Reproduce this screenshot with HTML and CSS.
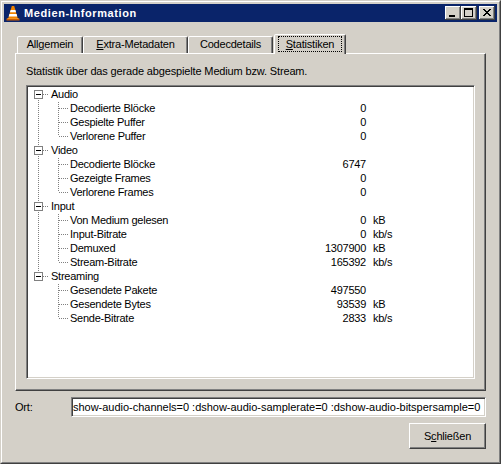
FILE: index.html
```html
<!DOCTYPE html>
<html lang="de">
<head>
<meta charset="utf-8">
<title>Medien-Information</title>
<link rel="stylesheet" href="styles.css">
</head>
<body>
<div class="window">
  <div class="frame">
    <div class="titlebar">
      <svg class="appicon" width="16" height="16" viewBox="0 0 16 16">
        <path d="M1.5 13.5h13v2h-13z" fill="#c85a00"/>
        <path d="M2.5 13h11v1h-11z" fill="#f7a440"/>
        <path d="M6.8 1h2.4l3.6 12.5H3.2z" fill="#f08300"/>
        <path d="M5.6 5h4.8l0.7 2.3H4.9z" fill="#ffffff"/>
        <path d="M4.4 9h7.2l0.7 2.4H3.7z" fill="#ffffff"/>
      </svg>
      <span class="title">Medien-Information</span>
      <div class="tbtns">
        <div class="tbtn"><svg width="16" height="14" viewBox="0 0 16 14"><rect x="4" y="9" width="6" height="2"/></svg></div>
        <div class="tbtn"><svg width="16" height="14" viewBox="0 0 16 14"><path d="M3 2h9v9H3z M4 4h7v6H4z" fill-rule="evenodd"/></svg></div>
        <div class="tbtn close"><svg width="16" height="14" viewBox="0 0 16 14" shape-rendering="crispEdges"><rect x="4" y="3" width="2" height="1"/><rect x="10" y="3" width="2" height="1"/><rect x="5" y="4" width="2" height="1"/><rect x="9" y="4" width="2" height="1"/><rect x="6" y="5" width="4" height="1"/><rect x="7" y="6" width="2" height="1"/><rect x="6" y="7" width="4" height="1"/><rect x="5" y="8" width="2" height="1"/><rect x="9" y="8" width="2" height="1"/><rect x="4" y="9" width="2" height="1"/><rect x="10" y="9" width="2" height="1"/></svg></div>
      </div>
    </div>
    <div class="content">
      <div class="tabs">
        <div class="tab t1">All<u>g</u>emein</div>
        <div class="tab t2"><u>E</u>xtra-Metadaten</div>
        <div class="tab t3">Codecdetails</div>
        <div class="tab t4 sel"><span class="focus"><u>S</u>tatistiken</span></div>
      </div>
      <div class="panel">
        <div class="desc">Statistik über das gerade abgespielte Medium bzw. Stream.</div>
        <div class="tree">
          <div class="treelist">
            <div class="row parent"><span class="exp"></span><span class="plab">Audio</span></div>
            <div class="children">
              <div class="row child"><span class="lab">Decodierte Blöcke</span><span class="val">0</span><span class="unit"></span></div>
              <div class="row child"><span class="lab">Gespielte Puffer</span><span class="val">0</span><span class="unit"></span></div>
              <div class="row child"><span class="lab">Verlorene Puffer</span><span class="val">0</span><span class="unit"></span></div>
            </div>
            <div class="row parent"><span class="exp"></span><span class="plab">Video</span></div>
            <div class="children">
              <div class="row child"><span class="lab">Decodierte Blöcke</span><span class="val">6747</span><span class="unit"></span></div>
              <div class="row child"><span class="lab">Gezeigte Frames</span><span class="val">0</span><span class="unit"></span></div>
              <div class="row child"><span class="lab">Verlorene Frames</span><span class="val">0</span><span class="unit"></span></div>
            </div>
            <div class="row parent"><span class="exp"></span><span class="plab">Input</span></div>
            <div class="children">
              <div class="row child"><span class="lab">Von Medium gelesen</span><span class="val">0</span><span class="unit">kB</span></div>
              <div class="row child"><span class="lab">Input-Bitrate</span><span class="val">0</span><span class="unit">kb/s</span></div>
              <div class="row child"><span class="lab">Demuxed</span><span class="val">1307900</span><span class="unit">kB</span></div>
              <div class="row child"><span class="lab">Stream-Bitrate</span><span class="val">165392</span><span class="unit">kb/s</span></div>
            </div>
            <div class="row parent"><span class="exp"></span><span class="plab">Streaming</span></div>
            <div class="children">
              <div class="row child"><span class="lab">Gesendete Pakete</span><span class="val">497550</span><span class="unit"></span></div>
              <div class="row child"><span class="lab">Gesendete Bytes</span><span class="val">93539</span><span class="unit">kB</span></div>
              <div class="row child"><span class="lab">Sende-Bitrate</span><span class="val">2833</span><span class="unit">kb/s</span></div>
            </div>
          </div>
        </div>
      </div>
      <div class="ortrow">
        <span class="ortlabel">Ort:</span>
        <div class="field"><span class="fieldtext">show-audio-channels=0 :dshow-audio-samplerate=0 :dshow-audio-bitspersample=0</span></div>
      </div>
      <div class="btnrow">
        <div class="btn">S<u>c</u>hließen</div>
      </div>
    </div>
  </div>
</div>
</body>
</html>
```

FILE: styles.css
```css
* { box-sizing: border-box; }
html, body { margin: 0; padding: 0; }
body {
  width: 501px;
  height: 464px;
  overflow: hidden;
  background: #D4D0C8;
  font-family: "Liberation Sans", Arial, sans-serif;
  font-size: 11px;
  color: #000;
}
.window {
  width: 501px;
  height: 464px;
  border: 1px solid;
  border-color: #D4D0C8 #404040 #404040 #D4D0C8;
}
.frame {
  height: 100%;
  border: 1px solid;
  border-color: #fff #808080 #808080 #fff;
  padding: 2px;
  display: flex;
  flex-direction: column;
}
.titlebar {
  height: 18px;
  flex: none;
  background: #0A246A;
  color: #fff;
  display: flex;
  align-items: center;
  padding: 0 2px 0 1px;
}
.appicon { flex: none; display: block; }
.title {
  margin-left: 3px;
  font-weight: bold;
  letter-spacing: 0.6px;
  line-height: 18px;
}
.tbtns { margin-left: auto; display: flex; }
.tbtn {
  width: 16px;
  height: 14px;
  background: #D4D0C8;
  box-shadow: inset -1px -1px #404040, inset 1px 1px #fff, inset -2px -2px #808080, inset 2px 2px #D4D0C8;
}
.tbtn svg { display: block; fill: #000; }
.tbtn.close { margin-left: 2px; }

.content {
  flex: 1;
  padding: 12px 11px 0 11px;
  display: flex;
  flex-direction: column;
}
.tabs {
  display: flex;
  height: 19px;
  padding-left: 2px;
  position: relative;
  z-index: 1;
}
.tab {
  margin-top: 2px;
  height: 17px;
  border: 1px solid;
  border-bottom: none;
  border-color: #fff #404040 transparent #fff;
  border-radius: 2px 2px 0 0;
  box-shadow: inset -1px 0 #808080;
  background: #D4D0C8;
  text-align: center;
  line-height: 15px;
  letter-spacing: -0.2px;
  white-space: nowrap;
}
.t1 { width: 66px; }
.t2 { width: 105px; }
.t3 { width: 85px; }
.tab.sel {
  margin-top: 0;
  margin-left: 1px;
  width: 72px;
  height: 20px;
  padding-top: 2px;
}
.focus {
  display: inline-block;
  outline: 1px dotted #000;
  padding: 0 7px 0 7px;
  line-height: 14px;
}
.panel {
  border: 1px solid;
  border-color: #fff #404040 #404040 #fff;
  box-shadow: inset -1px -1px #808080;
  padding: 11px 10px 11px 10px;
}
.desc {
  line-height: 13px;
  height: 13px;
  margin-bottom: 7px;
  letter-spacing: -0.15px;
}
.tree {
  height: 294px;
  background: #fff;
  border: 1px solid;
  border-color: #808080 #fff #fff #808080;
  box-shadow: inset 1px 1px #404040, inset -1px -1px #D4D0C8;
  padding: 1px 0 0 1px;
}
.treelist {
  background: repeating-linear-gradient(to bottom, #808080 0 1px, transparent 1px 2px) 10px 7px / 1px 182px no-repeat;
}
.row {
  display: flex;
  height: 14px;
  line-height: 14px;
  white-space: nowrap;
  letter-spacing: -0.25px;
}
.parent {
  background: repeating-linear-gradient(to right, #808080 0 1px, transparent 1px 2px) 15px 7px / 6px 1px no-repeat;
}
.exp {
  flex: none;
  width: 9px;
  height: 9px;
  margin: 3px 0 0 6px;
  border: 1px solid #808080;
  background: linear-gradient(#000, #000) 1px 3px / 5px 1px no-repeat #fff;
}
.plab { margin-left: 8px; }
.children {
  background: repeating-linear-gradient(to bottom, #808080 0 1px, transparent 1px 2px) 30px 1px / 1px calc(100% - 8px) no-repeat;
}
.child {
  background: repeating-linear-gradient(to right, #808080 0 1px, transparent 1px 2px) 31px 7px / 10px 1px no-repeat;
}
.lab { width: 278px; padding-left: 42px; flex: none; }
.val { width: 60px; text-align: right; flex: none; }
.unit { margin-left: 7px; }

.ortrow {
  display: flex;
  align-items: center;
  margin-top: 6px;
  height: 20px;
}
.ortlabel { width: 56px; flex: none; letter-spacing: -0.2px; }
.field {
  width: 415px;
  height: 20px;
  flex: none;
  background: #fff;
  border: 1px solid;
  border-color: #808080 #fff #fff #808080;
  box-shadow: inset 1px 1px #404040, inset -1px -1px #D4D0C8;
  overflow: hidden;
  display: flex;
  align-items: center;
  padding: 0 4px 0 1px;
  white-space: nowrap;
}
.fieldtext { flex: none; letter-spacing: -0.02px; }
.btnrow {
  display: flex;
  justify-content: flex-end;
  margin-top: 6px;
}
.btn {
  width: 77px;
  height: 26px;
  border: 1px solid;
  border-color: #fff #404040 #404040 #fff;
  box-shadow: inset -1px -1px #808080;
  display: flex;
  align-items: center;
  justify-content: center;
  letter-spacing: -0.2px;
}
```
